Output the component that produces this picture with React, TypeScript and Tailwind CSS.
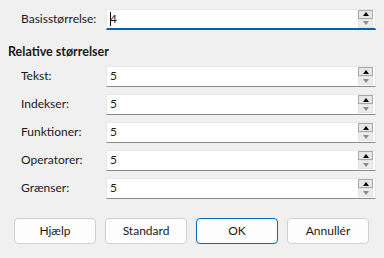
import React from "react";

const font = { fontFamily: 'Lato, "Noto Sans", sans-serif' };

function Spinner() {
  return (
    <div className="flex flex-col w-[15px] h-[18px] mr-[2px]">
      <div className="h-[9px] border border-[#a8a8a8] bg-[#e6e6e6] flex items-center justify-center">
        <div className="w-0 h-0 border-l-[3.5px] border-r-[3.5px] border-b-[4px] border-l-transparent border-r-transparent border-b-black" />
      </div>
      <div className="h-[9px] border border-[#e3e3e3] bg-[#ececec] flex items-center justify-center">
        <div className="w-0 h-0 border-l-[3.5px] border-r-[3.5px] border-t-[4px] border-l-transparent border-r-transparent border-t-[#8a8a8a]" />
      </div>
    </div>
  );
}

function Field({ label, value, focused }: { label: string; value: string; focused?: boolean }) {
  return (
    <div className="flex items-center h-[22px]">
      <span className="w-[106px] pl-[21px] text-[12px] text-[#1a1a1a] shrink-0">{label}</span>
      <div
        className={`relative flex items-center justify-between w-[270px] h-[21px] bg-white border border-[#e8e8e8] ${
          focused ? "border-b-2 border-b-[#005fb8]" : "border-b border-b-[#8a8a8a]"
        }`}
      >
        <span className="pl-[3px] text-[12px] text-[#1a1a1a] flex items-center">
          {focused && <span className="inline-block w-px h-[14px] bg-black mr-[-1px]" />}
          {value}
        </span>
        <Spinner />
      </div>
    </div>
  );
}

function Btn({ children, primary }: { children: React.ReactNode; primary?: boolean }) {
  return (
    <button
      className={`w-[82px] h-[26px] rounded-[4px] bg-[#fdfdfd] text-[12px] text-[#1a1a1a] ${
        primary ? "border border-[#0067c0] shadow-[inset_0_0_0_1px_#ffffff]" : "border border-[#d0d0d0]"
      }`}
    >
      {children}
    </button>
  );
}

export default function App() {
  return (
    <div className="w-[384px] h-[258px] bg-[#f0f0f0] relative overflow-hidden" style={font}>
      <div className="pt-[8px]">
        <Field label="Basisstørrelse:" value="4" focused />
      </div>
      <div className="pl-[8px] pt-[14px] pb-[5px] text-[12.5px] font-bold text-[#1a1a1a] leading-[16px]">
        Relative størrelser
      </div>
      <div className="flex flex-col gap-[6px]">
        <Field label="Tekst:" value="5" />
        <Field label="Indekser:" value="5" />
        <Field label="Funktioner:" value="5" />
        <Field label="Operatorer:" value="5" />
        <Field label="Grænser:" value="5" />
      </div>
      <div className="flex gap-[9px] pl-[14px] pt-[19px]">
        <Btn>Hjælp</Btn>
        <Btn>Standard</Btn>
        <Btn primary>OK</Btn>
        <Btn>Annullér</Btn>
      </div>
    </div>
  );
}
